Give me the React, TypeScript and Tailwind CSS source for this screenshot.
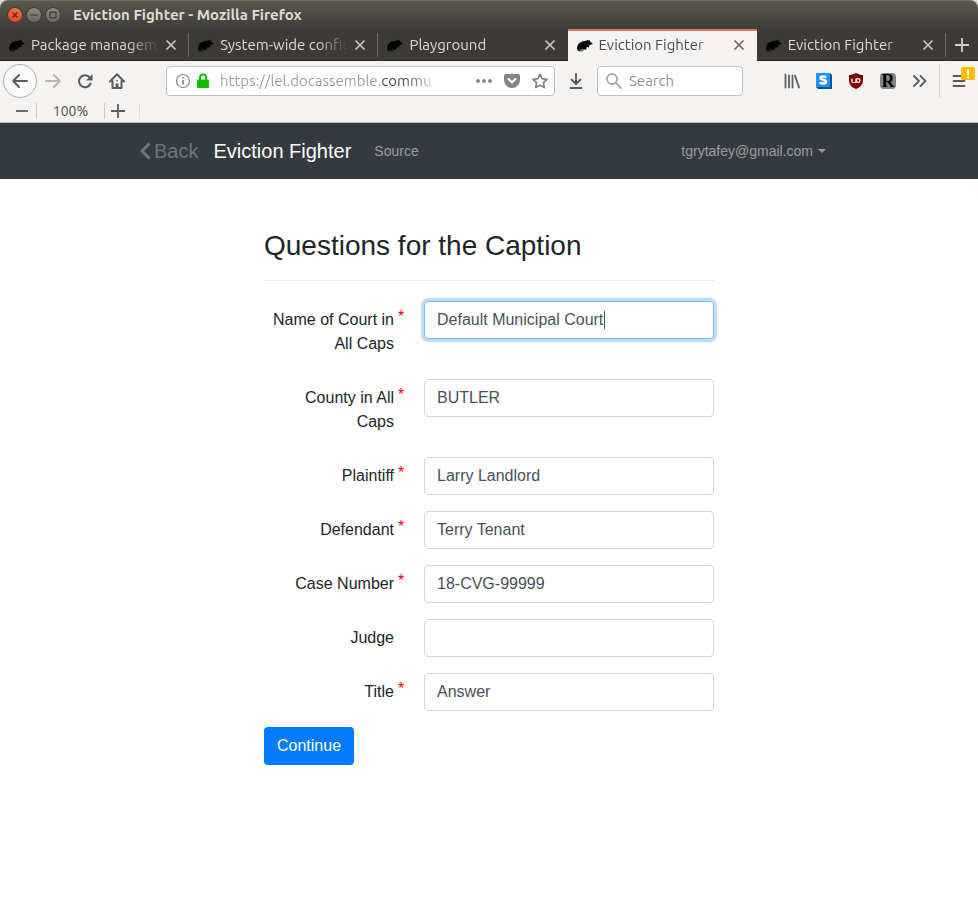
import React from "react";

const chromeFont = "font-['Ubuntu','Noto_Sans',sans-serif]";

function Rat() {
  return (
    <svg viewBox="0 0 17 16" className="h-4 w-[17px] shrink-0" aria-hidden="true">
      <path
        fill="#000"
        d="M1.2 12.2C.6 9.4 2 6.6 4.6 5.200C6.400 4.200 8.500 3.900 10.300 4.200L10.500 3.200Q11.200 2.500 12 3.300L12.300 3.700Q13.200 2.900 13.900 3.600L13.900 4.500L16.300 6.300Q16.900 6.900 16.200 7.300L13.700 7.900L12.700 8.900L13.400 10Q12.800 10.700 12 10.300L11.200 9.900L10 11.100L10.600 12.300Q9.500 13 7.900 12.600L6 12.500Q4.500 12.900 3 12.600Q2.700 13.200 4.600 13.400L8.200 13.500Q5.700 14.700 3 14.200Q1.500 13.700 1.200 12.200Z"
      />
    </svg>
  );
}

function Cross() {
  return (
    <svg viewBox="0 0 12 12" className="size-3" fill="none" stroke="currentColor" strokeWidth="1.700" aria-hidden="true">
      <path d="M1.500 1.500l9 9M10.500 1.500l-9 9" />
    </svg>
  );
}

function Plus() {
  return (
    <svg viewBox="0 0 14 14" className="size-3.5" fill="none" stroke="currentColor" strokeWidth="1.800" aria-hidden="true">
      <path d="M7 0v14M0 7h14" />
    </svg>
  );
}

const tabs = [
  { title: "Package managem", active: false },
  { title: "System-wide config", active: false },
  { title: "Playground", active: false },
  { title: "Eviction Fighter", active: true },
  { title: "Eviction Fighter", active: false },
];

function Tab({ title, active, divider }: { title: string; active: boolean; divider: boolean }) {
  return (
    <div
      className={
        "relative flex h-8 min-w-0 flex-1 items-center pr-3 pl-2 " +
        (active
          ? "border-t-2 border-[#d9795a] bg-[#f4f3f2] pb-[3px] text-[#4a4d52]"
          : "border-b border-[#2b2a27] text-[#dfdbd2]")
      }
    >
      <button type="button" className="flex min-w-0 flex-1 items-center gap-1.5 text-left">
        <Rat />
        <span className="min-w-0 flex-1 overflow-hidden whitespace-nowrap [mask-image:linear-gradient(to_right,#000_calc(100%-32px),transparent)]">
          {title}
        </span>
      </button>
      <button type="button" aria-label={"Close " + title} className={"ml-1.5 " + (active ? "text-[#6a6a6a]" : "text-[#c9c6c0]")}>
        <Cross />
      </button>
      {divider && <span className="absolute top-1 right-0 h-6 w-px bg-[#6b6963]" />}
    </div>
  );
}

function WindowChrome() {
  return (
    <header className={chromeFont + " text-[15px] leading-5"}>
      <div className="bg-[#dcdad5]">
        <div className="flex h-[29px] items-center gap-1 rounded-t-lg border-t border-[#6d6a61] bg-linear-to-b from-[#5a574e] to-[#3e3d39] pl-[7px]">
          <button type="button" aria-label="Close window" className="flex size-4 items-center justify-center rounded-full border border-[#3c3b37] bg-linear-to-b from-[#f4714a] to-[#df4a1c] text-[#5a2412]">
            <svg viewBox="0 0 8 8" className="size-2" stroke="currentColor" strokeWidth="1.200" aria-hidden="true"><path d="M1.500 1.500l5 5M6.500 1.500l-5 5" /></svg>
          </button>
          <button type="button" aria-label="Minimize window" className="ml-[-1px] flex size-4 items-center justify-center rounded-full border border-[#3c3b37] bg-linear-to-b from-[#8b887f] to-[#6b6962] text-[#3c3b37]">
            <svg viewBox="0 0 8 8" className="size-2" stroke="currentColor" strokeWidth="1.200" aria-hidden="true"><path d="M0.500 4h7" /></svg>
          </button>
          <button type="button" aria-label="Maximize window" className="ml-[-1px] flex size-4 items-center justify-center rounded-full border border-[#3c3b37] bg-linear-to-b from-[#8b887f] to-[#6b6962] text-[#3c3b37]">
            <svg viewBox="0 0 8 8" className="size-2" fill="none" stroke="currentColor" strokeWidth="1.200" aria-hidden="true"><path d="M1 1.200h6v5.600H1z" /></svg>
          </button>
          <h1 className="ml-2 font-bold text-[#dfdbd2]">Eviction Fighter - Mozilla Firefox</h1>
        </div>
      </div>

      <div className="flex h-8 bg-[#3c3b37]">
        {tabs.map((t, i) => (
          <Tab key={i} title={t.title} active={t.active} divider={i === 0 || i === 1 || i === 4} />
        ))}
        <button type="button" aria-label="New tab" className="flex w-8 items-center justify-center border-b border-[#2b2a27] text-[#d4d1ca]">
          <Plus />
        </button>
      </div>

      <div className="border-b border-[#bdbcba] bg-[#f4f3f2] text-[#5c5c5c]">
        <div className="flex h-10 items-center">
          <button type="button" aria-label="Back" className="ml-[3px] flex size-[34px] items-center justify-center rounded-full border border-[#b0afad] bg-[#fcfcfc]">
            <svg viewBox="0 0 16 16" className="size-4" fill="none" stroke="currentColor" strokeWidth="2" strokeLinecap="round" strokeLinejoin="round" aria-hidden="true"><path d="M15 8H1.500M7 2L1.200 8L7 14" /></svg>
          </button>
          <button type="button" aria-label="Forward" className="ml-2 text-[#b9b8b7]">
            <svg viewBox="0 0 16 16" className="size-4" fill="none" stroke="currentColor" strokeWidth="2" strokeLinecap="round" strokeLinejoin="round" aria-hidden="true"><path d="M1 8h13.500M9 2l5.800 6L9 14" /></svg>
          </button>
          <button type="button" aria-label="Reload" className="ml-4">
            <svg viewBox="0 0 16 16" className="size-4" fill="none" aria-hidden="true">
              <path d="M13 4.800A6 6 0 1 0 13.600 10.500" stroke="currentColor" strokeWidth="2" strokeLinecap="round" />
              <path d="M15.500 1v6.500H9z" fill="currentColor" />
            </svg>
          </button>
          <button type="button" aria-label="Home" className="ml-4">
            <svg viewBox="0 0 16 16" className="size-4" fill="none" stroke="currentColor" strokeWidth="2" strokeLinejoin="round" strokeLinecap="round" aria-hidden="true">
              <path d="M1 8.500L8 1.300L15 8.500M3.500 8v7h9V8" />
              <path d="M8 15v-4.500" strokeWidth="3" strokeLinecap="butt" />
              <path d="M8 7.500v.5" strokeWidth="1.500" />
            </svg>
          </button>

          <div className="ml-[41px] flex h-[30px] min-w-0 flex-[373_1_0%] items-center rounded border border-[#c2c1c0] bg-white pr-1.5 pl-2 text-[#858585]">
            <button type="button" aria-label="Site information">
              <svg viewBox="0 0 16 16" className="size-4" fill="none" stroke="currentColor" aria-hidden="true">
                <circle cx="8" cy="8" r="6.500" strokeWidth="1.200" />
                <path d="M8 7v4.500M8 4v1.600" strokeWidth="1.700" />
              </svg>
            </button>
            <svg viewBox="0 0 14 16" className="ml-[5px] h-4 w-3.5 shrink-0" aria-hidden="true">
              <path d="M4 7V4.500a3 3 0 0 1 6 0V7" fill="none" stroke="#12bc00" strokeWidth="2" />
              <rect x="1" y="6.500" width="12" height="8.500" rx="1" fill="#12bc00" />
            </svg>
            <input
              aria-label="Address"
              defaultValue="https://lel.docassemble.commu"
              className="ml-2.5 w-0 min-w-0 flex-1 bg-[linear-gradient(to_right,#999_162px,#444_162px,#444_186px,transparent_220px)] bg-clip-text text-transparent outline-none"
            />
            <button type="button" aria-label="Page actions" className="ml-3">
              <svg viewBox="0 0 16 16" className="size-4" fill="currentColor" aria-hidden="true"><circle cx="2" cy="8" r="1.900" /><circle cx="8" cy="8" r="1.900" /><circle cx="14" cy="8" r="1.900" /></svg>
            </button>
            <button type="button" aria-label="Save to Pocket" className="ml-3">
              <svg viewBox="0 0 16 16" className="size-4" aria-hidden="true">
                <path d="M1.500 1h13Q16 1 16 2.500V7a8 8 0 0 1-16 0V2.500Q0 1 1.500 1z" fill="currentColor" />
                <path d="M4.500 6L8 9.300L11.500 6" fill="none" stroke="#fff" strokeWidth="2" strokeLinecap="round" strokeLinejoin="round" />
              </svg>
            </button>
            <button type="button" aria-label="Bookmark this page" className="ml-3">
              <svg viewBox="0 0 16 16" className="size-4" fill="none" stroke="currentColor" strokeWidth="1.700" strokeLinejoin="round" aria-hidden="true"><path d="M8 1.200l2.100 4.500 4.900.6-3.600 3.400.9 4.900L8 12.200l-4.300 2.400.9-4.900L1 6.300l4.900-.6z" /></svg>
            </button>
          </div>

          <button type="button" aria-label="Downloads" className="ml-[13px]">
            <svg viewBox="0 0 16 16" className="size-4" fill="none" stroke="currentColor" strokeWidth="1.900" strokeLinecap="round" strokeLinejoin="round" aria-hidden="true"><path d="M8 1v9.500M3.500 6.500L8 11l4.500-4.500M2.500 15h11" /></svg>
          </button>

          <div className="ml-[13px] flex h-[30px] min-w-0 flex-[136_1_0%] items-center rounded border border-[#c2c1c0] bg-white pl-2 text-[#a5a5a5]">
            <svg viewBox="0 0 16 16" className="size-4 shrink-0" fill="none" stroke="currentColor" strokeWidth="1.800" strokeLinecap="round" aria-hidden="true"><circle cx="6" cy="6" r="5" /><path d="M9.800 9.800L15 15" /></svg>
            <input aria-label="Search" placeholder="Search" className="ml-[7px] w-0 min-w-0 flex-1 text-[#444] outline-none placeholder:text-[#8f8f8f]" />
          </div>

          <div className="ml-[41px] flex items-center gap-4">
            <button type="button" aria-label="Library">
              <svg viewBox="0 0 16 16" className="size-4" fill="none" stroke="currentColor" strokeWidth="1.800" strokeLinecap="round" aria-hidden="true"><path d="M1.500 1.500v13M5 2.500v12M8.500 2.500v12M11 2.500l4 12" /></svg>
            </button>
            <button type="button" aria-label="Stylish">
              <svg viewBox="0 0 16 16" className="size-4" aria-hidden="true">
                <path d="M0 0h14l2 2v14H2l-2-2z" fill="#0a4f9c" />
                <path d="M0 0h14v14H0z" fill="#1c93f5" />
                <path d="M10 4.500C9 3.300 4.500 3 4.500 5.100S10 6.300 10 8.700S5 10.800 3.900 9.200" fill="none" stroke="#fff" strokeWidth="2.400" />
              </svg>
            </button>
            <button type="button" aria-label="uBlock Origin">
              <svg viewBox="0 0 16 16" className="size-4" aria-hidden="true">
                <path d="M8 0Q11.500 2 15 2.200V8q0 5-7 8q-7-3-7-8V2.200Q4.500 2 8 0z" fill="#800000" />
                <path d="M4 5.500v2.700q0 1.300 1.500 1.300H8V5.500" fill="none" stroke="#fff" strokeWidth="1.200" />
                <circle cx="10.200" cy="7.500" r="1.800" fill="none" stroke="#fff" strokeWidth="1.200" />
              </svg>
            </button>
            <button type="button" aria-label="RECAP" className="flex size-4 items-center justify-center rounded-sm bg-[#858585] font-['Liberation_Serif',serif] text-lg leading-4 font-bold text-black">
              R
            </button>
            <button type="button" aria-label="More tools">
              <svg viewBox="0 0 16 16" className="size-4" fill="none" stroke="currentColor" strokeWidth="1.800" strokeLinecap="round" strokeLinejoin="round" aria-hidden="true"><path d="M2 3l5 5-5 5M8.500 3l5 5-5 5" /></svg>
            </button>
          </div>
          <span className="ml-[11px] h-[34px] w-px bg-[#d5d4d2]" />
          <button type="button" aria-label="Open menu" className="relative mr-[11px] ml-[11px]">
            <svg viewBox="0 0 16 16" className="size-4" fill="none" stroke="currentColor" strokeWidth="1.800" strokeLinecap="round" aria-hidden="true"><path d="M2.500 3h11M2.500 8h11M2.500 13h11" /></svg>
            <span className="absolute -top-1.5 left-2.5 flex h-[13px] w-3.5 items-center justify-center rounded-xs bg-[#ffbf00]">
              <svg viewBox="0 0 4 10" className="h-2.5 w-1" aria-hidden="true"><path d="M2 .5v5.500M2 7.500v2" stroke="#fff" strokeWidth="2" /></svg>
            </span>
          </button>
        </div>
        <div className="flex h-[21px] items-center pb-px pl-[15px]">
          <button type="button" aria-label="Zoom out">
            <svg viewBox="0 0 14 14" className="size-3.5" aria-hidden="true"><path d="M1 7h12" stroke="currentColor" strokeWidth="1.800" /></svg>
          </button>
          <span className="ml-[7px] h-4 w-px bg-[#cccbc9]" />
          <button type="button" className="w-[67px] text-center text-sm text-[#4c4c4c]">100%</button>
          <span className="h-4 w-px bg-[#cccbc9]" />
          <button type="button" aria-label="Zoom in" className="ml-1.5">
            <Plus />
          </button>
          <span className="ml-3.5 h-4 w-px bg-[#e0dfdd]" />
        </div>
      </div>
    </header>
  );
}

function SiteNav() {
  return (
    <nav className="bg-[#343a40]">
      <div className="mx-auto flex h-14 max-w-[720px] items-center pr-[23px] pl-2.5">
        <button type="button" className="flex items-center gap-[3px] text-xl text-[#6c757d]">
          <svg viewBox="0 0 12 18" className="h-[18px] w-3" fill="none" stroke="currentColor" strokeWidth="3" aria-hidden="true"><path d="M10.500 1.500L3 9l7.500 7.500" /></svg>
          Back
        </button>
        <a href="#top" className="ml-[15px] text-xl text-white">Eviction Fighter</a>
        <a href="#source" className="ml-[23px] text-sm text-white/50">Source</a>
        <button type="button" className="ml-auto flex items-center gap-[5px] text-sm text-white/50">
          tgrytafey@gmail.com
          <svg viewBox="0 0 8 4" className="h-1 w-2" fill="currentColor" aria-hidden="true"><path d="M0 0h8L4 4z" /></svg>
        </button>
      </div>
    </nav>
  );
}

const fields = [
  { id: "court", label: "Name of Court in All Caps", value: "Default Municipal Court", required: true, focused: true },
  { id: "county", label: "County in All Caps", value: "BUTLER", required: true, focused: false },
  { id: "plaintiff", label: "Plaintiff", value: "Larry Landlord", required: true, focused: false },
  { id: "defendant", label: "Defendant", value: "Terry Tenant", required: true, focused: false },
  { id: "case", label: "Case Number", value: "18-CVG-99999", required: true, focused: false },
  { id: "judge", label: "Judge", value: "", required: false, focused: false },
  { id: "title", label: "Title", value: "Answer", required: true, focused: false },
];

export default function App() {
  return (
    <div className="min-h-screen bg-white font-['Liberation_Sans',Arial,sans-serif] text-base text-[#212529]">
      <WindowChrome />
      <SiteNav />
      <main className="mx-auto max-w-[450px] py-12">
        <h2 className="text-[28px] leading-[38px]">Questions for the Caption</h2>
        <hr className="mt-[15px] mb-5 border-[#e9e9e9]" />
        <form onSubmit={(e) => e.preventDefault()}>
          {fields.map((f) => (
            <div key={f.id} className="mb-4 flex items-start gap-5">
              <label htmlFor={f.id} className="flex w-[140px] shrink-0 py-[7px]">
                <span className="flex-1 text-right">{f.label}</span>
                <span className="w-2.5 pl-1 leading-[18px] text-[#f00]">{f.required ? "*" : ""}</span>
              </label>
              <div className="relative min-w-0 flex-1">
                <input
                  id={f.id}
                  type="text"
                  defaultValue={f.value}
                  className={
                    "block h-[38px] w-full rounded border bg-white px-3 text-[#495057] outline-none " +
                    (f.focused ? "border-[#80bdff] ring-3 ring-[#bfdeff]" : "border-[#ced4da]")
                  }
                />
                {f.focused && <span className="absolute top-2.5 left-[180px] h-[18px] w-px bg-[#495057]" />}
              </div>
            </div>
          ))}
          <button type="submit" className="h-[38px] rounded bg-[#007bff] px-[13px] text-white">Continue</button>
        </form>
      </main>
    </div>
  );
}
